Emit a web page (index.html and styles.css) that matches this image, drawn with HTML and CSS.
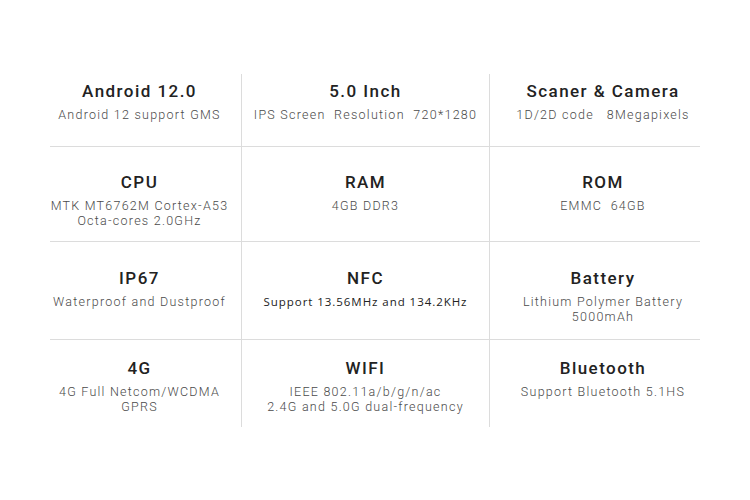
FILE: index.html
```html
<!DOCTYPE html>
<html>
<head>
<meta charset="utf-8">
<link rel="stylesheet" href="styles.css">
</head>
<body>
<div class="specs">
  <div class="cell r1 c1"><div class="title">Android 12.0</div><div class="sub">Android 12 support GMS</div></div>
  <div class="cell r1 c2"><div class="title">5.0 Inch</div><div class="sub">IPS Screen&nbsp; Resolution&nbsp; 720*1280</div></div>
  <div class="cell r1 c3"><div class="title">Scaner &amp; Camera</div><div class="sub">1D/2D code&nbsp;&nbsp; 8Megapixels</div></div>

  <div class="cell r2 c1"><div class="title">CPU</div><div class="sub">MTK MT6762M Cortex-A53<br>Octa-cores 2.0GHz</div></div>
  <div class="cell r2 c2"><div class="title">RAM</div><div class="sub">4GB DDR3</div></div>
  <div class="cell r2 c3"><div class="title">ROM</div><div class="sub">EMMC&nbsp; 64GB</div></div>

  <div class="cell r3 c1"><div class="title">IP67</div><div class="sub">Waterproof and Dustproof</div></div>
  <div class="cell r3 c2"><div class="title">NFC</div><div class="sub alt">Support 13.56MHz and 134.2KHz</div></div>
  <div class="cell r3 c3"><div class="title">Battery</div><div class="sub">Lithium Polymer Battery<br>5000mAh</div></div>

  <div class="cell r4 c1"><div class="title">4G</div><div class="sub">4G Full Netcom/WCDMA<br>GPRS</div></div>
  <div class="cell r4 c2"><div class="title">WIFI</div><div class="sub">IEEE 802.11a/b/g/n/ac<br>2.4G and 5.0G dual-frequency</div></div>
  <div class="cell r4 c3"><div class="title">Bluetooth</div><div class="sub">Support Bluetooth 5.1HS</div></div>
</div>
</body>
</html>
```

FILE: styles.css
```css
* { box-sizing: border-box; }
html, body { margin: 0; padding: 0; background: #fff; }
body { width: 750px; height: 500px; overflow: hidden; font-family: Roboto, "Liberation Sans", sans-serif; }

.specs {
  margin: 74px 0 0 50px;
  width: 650px;
  display: grid;
  grid-template-columns: 192px 248px 210px;
  grid-template-rows: 73px 95px 98px 87px;
}

.cell {
  display: flex;
  flex-direction: column;
  align-items: center;
  text-align: center;
}
.c1, .c2 { border-right: 1px solid #dcdcdc; }
.r1, .r2, .r3 { border-bottom: 1px solid #dcdcdc; }

.c1 { padding-right: 12px; }
.c3 { padding-left: 16px; }

.r1 { padding-top: 7px; }
.r2 { padding-top: 25px; }
.r3 { padding-top: 26px; }
.r4 { padding-top: 18px; }

.title {
  font-size: 17px;
  line-height: 20px;
  font-weight: 500;
  letter-spacing: 1.45px;
  color: #222;
}
.sub {
  margin-top: 6px;
  font-size: 12.5px;
  line-height: 15px;
  font-weight: 300;
  letter-spacing: 1.25px;
  color: #4a4a4a;
  white-space: nowrap;
}
.sub.alt {
  font-family: "Open Sans", sans-serif;
  font-weight: 400;
  letter-spacing: 0.95px;
  color: #222;
  font-size: 11.5px;
}
```
